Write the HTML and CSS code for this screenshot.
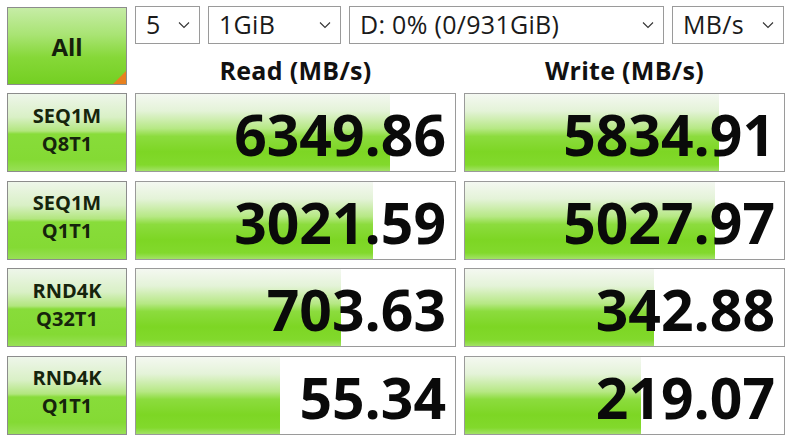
FILE: index.html
```html
<!DOCTYPE html>
<html>
<head>
<meta charset="utf-8">
<link rel="stylesheet" href="styles.css">
</head>
<body>
<div class="app">
  <div class="top">
    <div class="all-btn">All<span class="corner"></span></div>
    <div class="top-right">
      <div class="selects">
        <div class="sel s-count"><span>5</span><svg class="chev" viewBox="0 0 12 8"><path d="M1 1.5 L6 6.5 L11 1.5" fill="none" stroke="#333" stroke-width="1.1"/></svg></div>
        <div class="sel s-size"><span>1GiB</span><svg class="chev" viewBox="0 0 12 8"><path d="M1 1.5 L6 6.5 L11 1.5" fill="none" stroke="#333" stroke-width="1.1"/></svg></div>
        <div class="sel s-drive"><span>D: 0% (0/931GiB)</span><svg class="chev" viewBox="0 0 12 8"><path d="M1 1.5 L6 6.5 L11 1.5" fill="none" stroke="#333" stroke-width="1.1"/></svg></div>
        <div class="sel s-unit"><span>MB/s</span><svg class="chev" viewBox="0 0 12 8"><path d="M1 1.5 L6 6.5 L11 1.5" fill="none" stroke="#333" stroke-width="1.1"/></svg></div>
      </div>
      <div class="headers">
        <div class="hdr">Read (MB/s)</div>
        <div class="hdr">Write (MB/s)</div>
      </div>
    </div>
  </div>
  <div class="rows">
    <div class="label">SEQ1M<br>Q8T1</div>
    <div class="cell" style="background-size:254px 100%">6349.86</div>
    <div class="cell" style="background-size:254px 100%">5834.91</div>

    <div class="label">SEQ1M<br>Q1T1</div>
    <div class="cell" style="background-size:237px 100%">3021.59</div>
    <div class="cell" style="background-size:250px 100%">5027.97</div>

    <div class="label">RND4K<br>Q32T1</div>
    <div class="cell" style="background-size:205px 100%">703.63</div>
    <div class="cell" style="background-size:189px 100%">342.88</div>

    <div class="label">RND4K<br>Q1T1</div>
    <div class="cell" style="background-size:144px 100%">55.34</div>
    <div class="cell" style="background-size:176px 100%">219.07</div>
  </div>
</div>
</body>
</html>
```

FILE: styles.css
```css
html, body {
  margin: 0;
  padding: 0;
  background: #ffffff;
}
.app {
  width: 800px;
  height: 438px;
  padding: 6px 0 0 7px;
  box-sizing: border-box;
  font-family: "Open Sans", "Liberation Sans", sans-serif;
  color: #111;
}
.top {
  display: flex;
  gap: 8px;
  height: 87px;
}
.all-btn {
  position: relative;
  width: 120px;
  height: 78px;
  margin-top: 1px;
  box-sizing: border-box;
  border: 1px solid #8c8c8c;
  background: linear-gradient(to bottom, #c6eca6 0%, #a9e474 35%, #86d838 65%, #74cf22 100%);
  display: flex;
  align-items: center;
  justify-content: center;
  font-weight: 700;
  font-size: 24px;
  color: #15200c;
  overflow: hidden;
}
.corner {
  position: absolute;
  right: 0;
  bottom: 0;
  width: 0;
  height: 0;
  border-style: solid;
  border-width: 0 0 13px 13px;
  border-color: transparent transparent #e8801e transparent;
}
.top-right {
  display: flex;
  flex-direction: column;
}
.selects {
  display: flex;
  gap: 8px;
  height: 38px;
}
.sel {
  box-sizing: border-box;
  height: 38px;
  border: 1px solid #9a9a9a;
  background: #fff;
  display: flex;
  align-items: center;
  justify-content: space-between;
  padding: 0 9px 0 10px;
  font-size: 25px;
  letter-spacing: 0.3px;
  color: #1a1a1a;
}
.sel span { line-height: 1; margin-top: -2px; }
.chev {
  width: 12px;
  height: 8px;
}
.s-count { width: 65px; }
.s-size { width: 133px; }
.s-drive { width: 315px; }
.s-unit { width: 112px; }
.headers {
  display: flex;
  gap: 8px;
  flex: 1;
}
.hdr {
  width: 321px;
  display: flex;
  align-items: center;
  justify-content: center;
  font-weight: 700;
  font-size: 25px;
  letter-spacing: 0.3px;
  padding-top: 3px;
  color: #111;
}
.rows {
  display: grid;
  grid-template-columns: 120px 321px 321px;
  grid-auto-rows: 79px;
  column-gap: 8px;
  row-gap: 8.5px;
}
.label {
  box-sizing: border-box;
  border: 1px solid #8c8c8c;
  background: linear-gradient(to bottom, #eef6ea 0%, #d9f0c6 30%, #b2e67e 48%, #88dc3a 52%, #84da34 85%, #98e056 100%);
  display: flex;
  align-items: center;
  justify-content: center;
  text-align: center;
  font-weight: 700;
  font-size: 20px;
  line-height: 28px;
  padding-bottom: 6px;
  color: #16240c;
}
.cell {
  box-sizing: border-box;
  border: 1px solid #9a9a9a;
  background-color: #fff;
  background-image: linear-gradient(to bottom, #f4f8f1 0%, #e4f3d8 22%, #b6e884 45%, #8cdc3e 55%, #7dd624 75%, #82d92c 92%, #a2e266 100%);
  background-repeat: no-repeat;
  background-origin: padding-box;
  display: flex;
  align-items: center;
  justify-content: flex-end;
  padding: 4px 9px 0 0;
  font-weight: 700;
  font-size: 57px;
  line-height: 1;
  color: #0a0a0a;
}
```
